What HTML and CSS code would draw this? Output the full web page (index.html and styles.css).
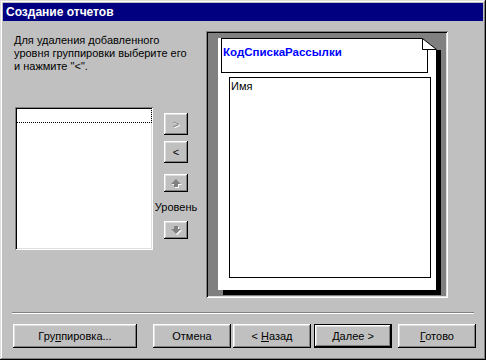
FILE: index.html
```html
<!DOCTYPE html>
<html lang="ru">
  <head>
    <meta charset="UTF-8" />
    <title>Создание отчетов</title>
    <link rel="stylesheet" href="styles.css">
  </head>
  <body>
    <div class="window">
      <div class="titlebar">Создание отчетов</div>

      <div class="wizard-body">
        <div class="left-side">
          <p class="hint">
            Для удаления добавленного<br />
            уровня группировки выберите его<br />
            и нажмите "&lt;".
          </p>
          <div class="picker">
            <div class="listbox">
              <div class="list-item"></div>
            </div>
            <div class="movers">
              <button class="btn btn-move disabled">&gt;</button>
              <button class="btn btn-move btn-back-move">&lt;</button>
              <button class="btn btn-level btn-up">
                <svg width="11" height="9" viewBox="0 0 11 9">
                  <polygon points="6,1 11,6 8,6 8,9 4,9 4,6 1,6" fill="#fff" />
                  <polygon points="5,0 10,5 7,5 7,8 3,8 3,5 0,5" fill="#808080" />
                </svg>
              </button>
              <span class="level-label">Уровень</span>
              <button class="btn btn-level btn-down">
                <svg width="11" height="9" viewBox="0 0 11 9">
                  <polygon points="4,1 8,1 8,4 11,4 6,9 1,4 4,4" fill="#fff" />
                  <polygon points="3,0 7,0 7,3 10,3 5,8 0,3 3,3" fill="#808080" />
                </svg>
              </button>
            </div>
          </div>
        </div>

        <div class="preview">
          <div class="page">
            <div class="group-head">КодСпискаРассылки</div>
            <div class="detail">Имя</div>
            <!-- dog-ear corner of the sample page -->
            <svg class="fold" width="20" height="12" viewBox="0 0 20 12">
              <rect x="0" y="0" width="20" height="12" fill="#808080" />
              <polygon points="0.5,0.5 0.5,11.5 14.5,11.5" fill="#fff" stroke="#000" stroke-width="1" />
            </svg>
          </div>
        </div>
      </div>

      <div class="separator"></div>

      <div class="footer">
        <button class="btn btn-wide"><span>Гру<u>п</u>пировка...</span></button>
        <button class="btn btn-cancel"><span>Отмена</span></button>
        <button class="btn btn-prev"><span>&lt; <u>Н</u>азад</span></button>
        <button class="btn btn-next default"><span><u>Д</u>алее &gt;</span></button>
        <button class="btn btn-finish"><span><u>Г</u>отово</span></button>
      </div>
    </div>
  </body>
</html>
```

FILE: styles.css
```css
body {
  margin: 0;
  background-color: #c0c0c0;
  font-family: "Liberation Sans", Arial, sans-serif;
  font-size: 11px;
  color: #000;
}

.window {
  width: 486px;
  height: 360px;
  box-sizing: border-box;
  padding: 3px;
  background: #c0c0c0;
  box-shadow: inset -1px -1px #000, inset 1px 1px #dfdfdf,
    inset -2px -2px #808080, inset 2px 2px #fff;
}

.titlebar {
  height: 18px;
  line-height: 18px;
  background: #000080;
  color: #fff;
  font-family: "Liberation Sans Narrow", "Liberation Sans", Arial, sans-serif;
  font-weight: bold;
  font-size: 12px;
  padding-left: 3px;
}

.wizard-body {
  display: flex;
  padding: 10px 0 0 11px;
}

.left-side {
  width: 192px;
}

.hint {
  margin: 3px 0 0 0;
  line-height: 13px;
}

.picker {
  display: flex;
  margin-top: 34px;
}

.listbox {
  width: 138px;
  height: 143px;
  margin-left: 1px;
  box-sizing: border-box;
  padding: 1px;
  background: #fff;
  box-shadow: inset 1px 1px #808080, inset -1px -1px #fff,
    inset 2px 2px #000, inset -2px -2px #dfdfdf;
}

.list-item {
  height: 15px;
  box-sizing: border-box;
  border: 1px dotted #000;
}

.movers {
  width: 46px;
  display: flex;
  flex-direction: column;
  align-items: center;
  padding-top: 6px;
}

.btn {
  font-family: "Liberation Sans", Arial, sans-serif;
  font-size: 11px;
  color: #000;
  background: #c0c0c0;
  border: none;
  padding: 0;
  margin: 0;
  box-sizing: border-box;
  box-shadow: inset -1px -1px #000, inset 1px 1px #fff,
    inset -2px -2px #808080, inset 2px 2px #dfdfdf;
  display: flex;
  align-items: center;
  justify-content: center;
}

.btn u {
  text-decoration: underline;
}

.btn-move {
  width: 24px;
  height: 22px;
  font-size: 11px;
}

.btn-back-move {
  margin-top: 6px;
}

.disabled {
  color: #808080;
  text-shadow: 1px 1px 0 #fff;
}

.btn-level {
  width: 24px;
  height: 18px;
}

.btn-up {
  margin-top: 11px;
}

.level-label {
  margin-top: 8px;
  line-height: 14px;
}

.btn-down {
  margin-top: 7px;
}

.preview {
  width: 242px;
  height: 267px;
  box-sizing: border-box;
  padding: 7px 0 0 12px;
  background: #808080;
  box-shadow: inset 1px 1px #808080, inset -1px -1px #fff,
    inset 2px 2px #000, inset -2px -2px #dfdfdf;
}

.page {
  position: relative;
  width: 218px;
  height: 252px;
  background: #fff;
  box-shadow: 5px 5px 0 #000;
}

.group-head {
  width: 207px;
  height: 35px;
  margin-left: 3px;
  box-sizing: border-box;
  border: 1px solid #000;
  padding: 7px 0 0 1px;
  color: #0000ff;
  font-weight: bold;
  font-size: 11.5px;
  line-height: 13px;
}

.detail {
  width: 202px;
  height: 201px;
  margin: 4px 0 0 11px;
  box-sizing: border-box;
  border: 1px solid #000;
  padding: 2px 0 0 1px;
  line-height: 13px;
}

.fold {
  position: absolute;
  top: 0;
  left: 204px;
  display: block;
}

.separator {
  height: 1px;
  margin: 14px 9px 0 9px;
  background: #808080;
  border-bottom: 1px solid #fff;
}

.footer {
  display: flex;
  padding: 10px 0 0 10px;
}

.footer .btn {
  width: 78px;
  height: 24px;
}

.footer .btn-wide {
  width: 124px;
}

.btn-cancel {
  margin-left: 16px;
}

.btn-prev {
  margin-left: 2px;
}

.btn-next {
  margin-left: 3px;
}

.btn-finish {
  margin-left: 6px;
}

.default {
  box-shadow: inset 0 0 0 1px #000, inset -2px -2px #000, inset 2px 2px #fff,
    inset -3px -3px #808080, inset 3px 3px #dfdfdf;
}
```
